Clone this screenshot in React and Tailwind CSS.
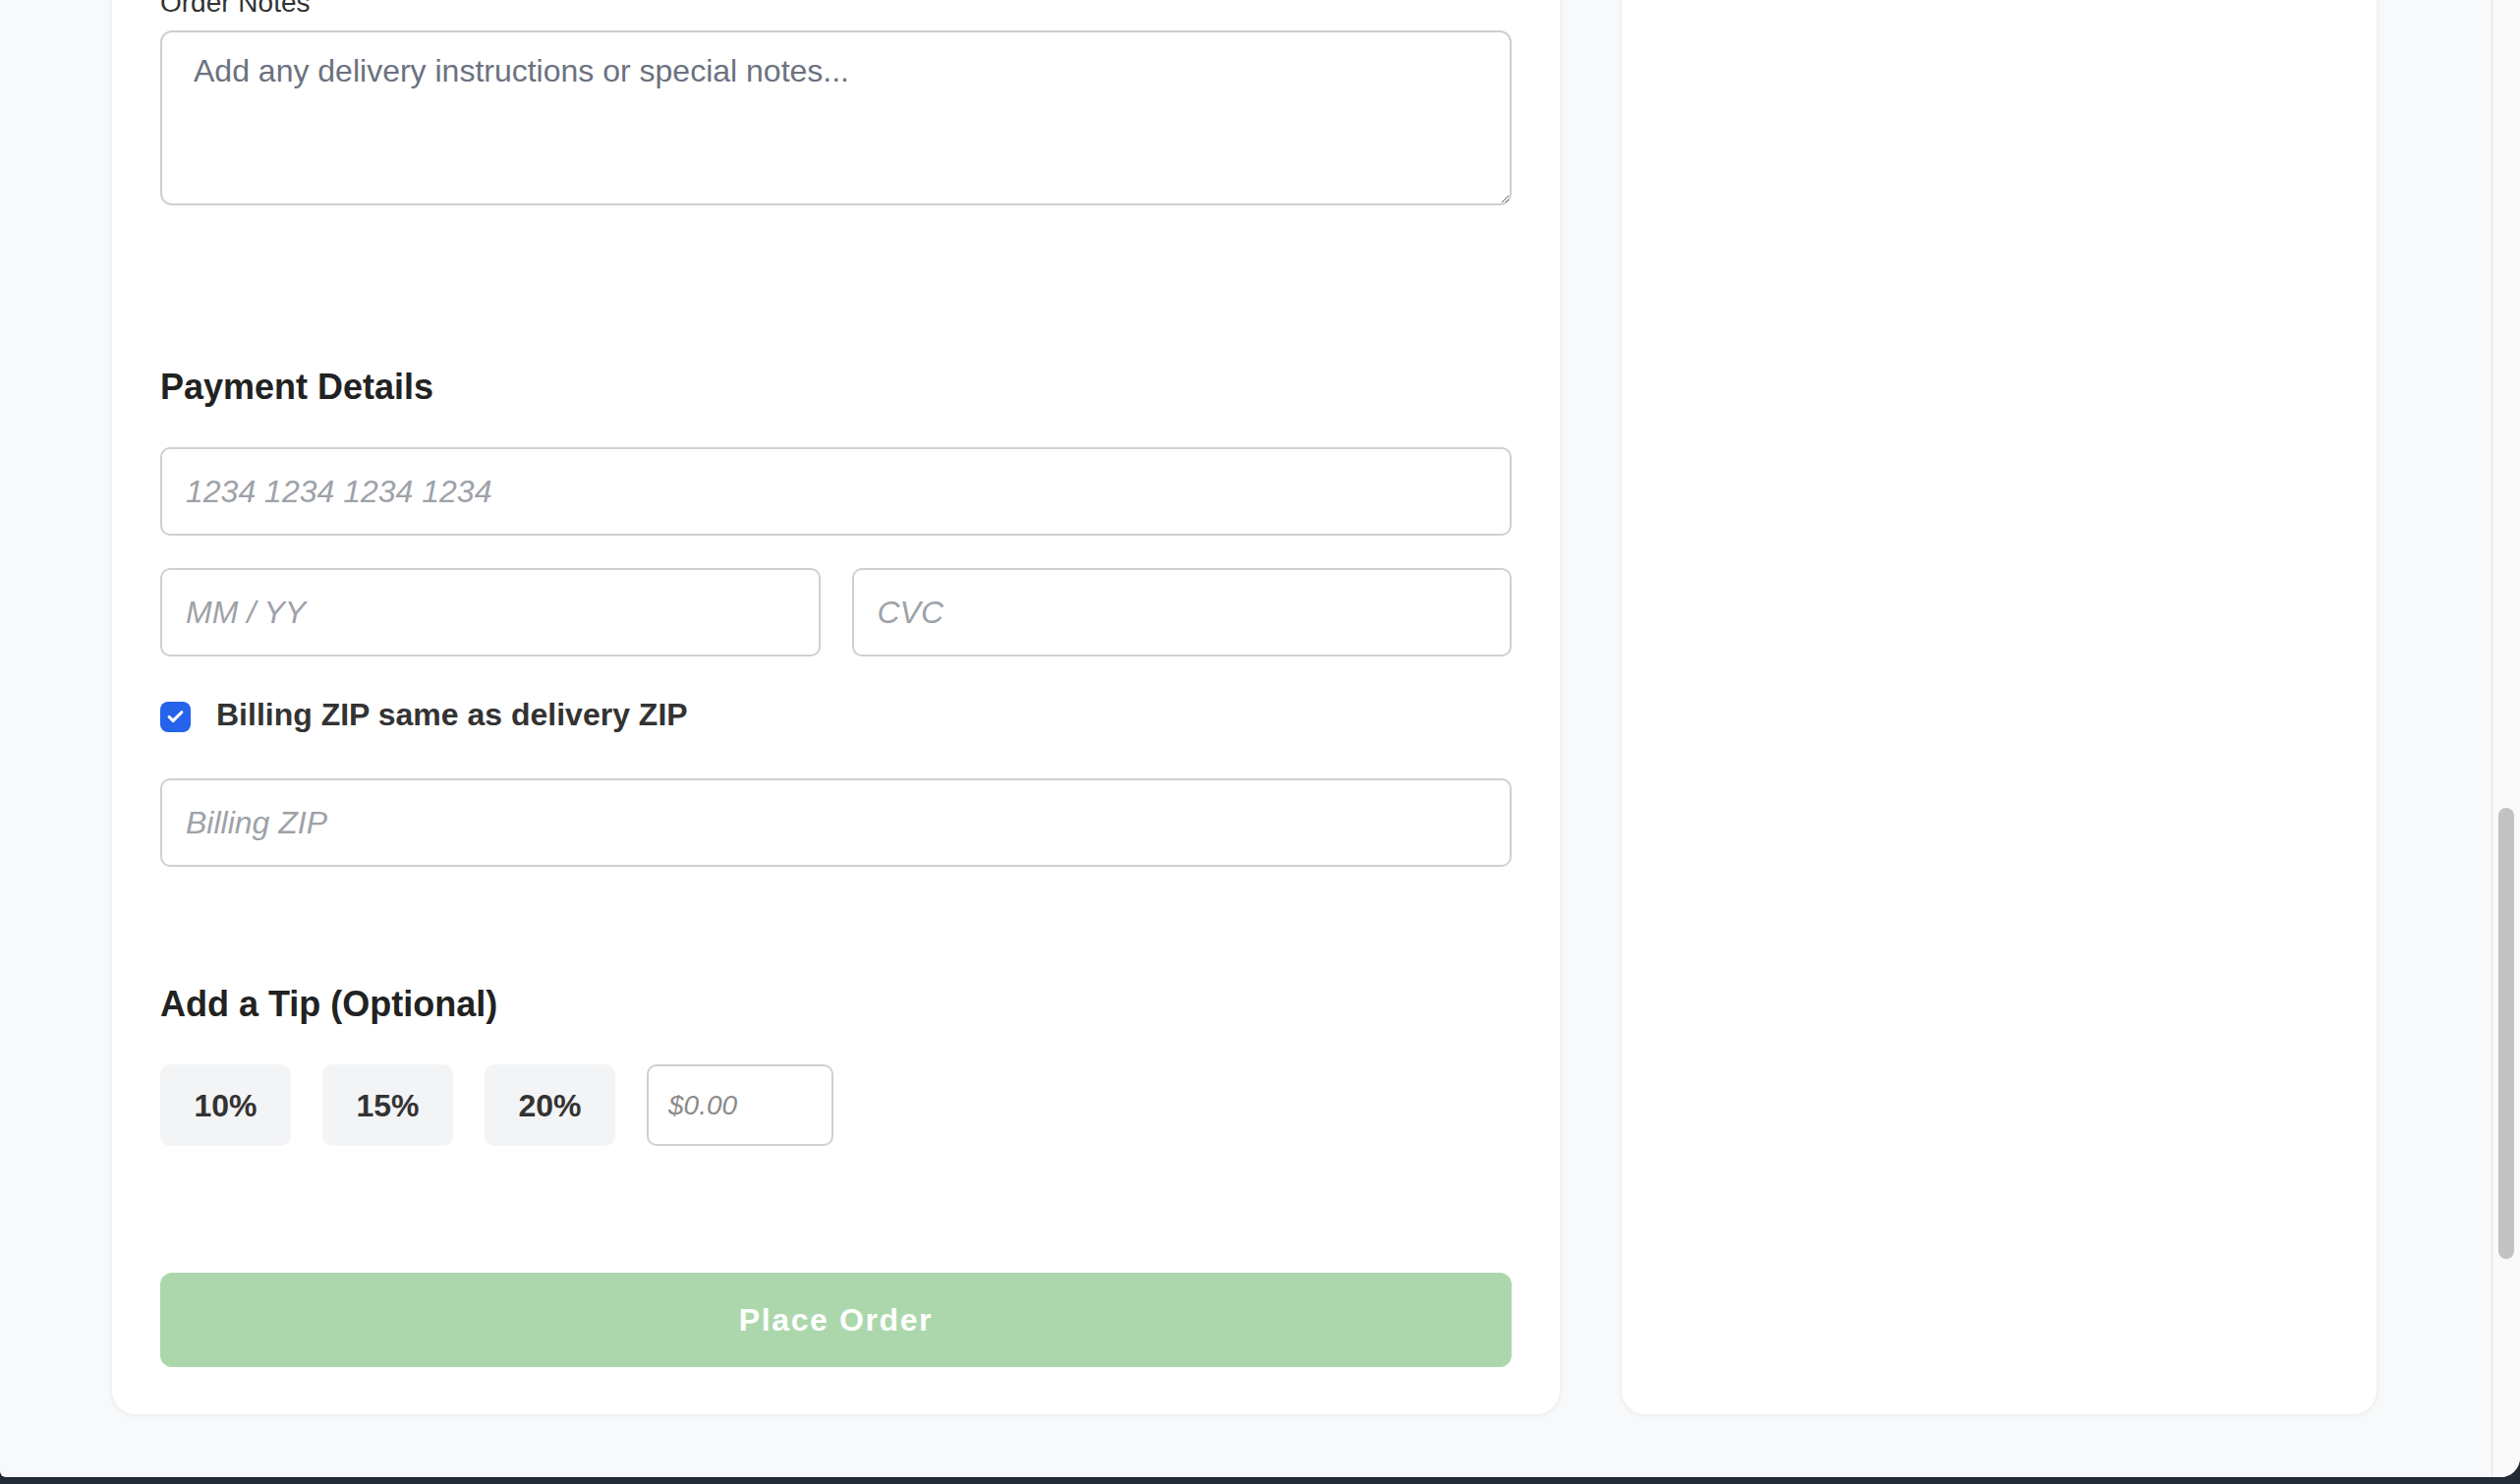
import React from 'react';
import { Check } from 'lucide-react';

const inputClass =
  'block w-full h-[90px] rounded-[10px] border-2 border-[#d0d0d0] bg-white px-[24px] text-[32px] italic text-[#333] placeholder:text-[#9ea2a8] outline-none';

function TipButton({ label }) {
  return (
    <button className="h-[83px] w-[133px] rounded-[10px] bg-[#f3f4f6] text-[32px] font-bold text-[#333]">
      {label}
    </button>
  );
}

export default function App() {
  return (
    <div className="h-[1510px] w-full overflow-hidden bg-[#222a35] font-['Liberation_Sans',Arial,sans-serif]">
      <div className="flex h-[1503px] overflow-hidden rounded-bl-[6px] rounded-br-[20px] bg-[#f8f9fa]">
        {/* Página desplazada: solo se ve la parte final del checkout */}
        <main className="flex-1 overflow-hidden">
          <div className="-mt-[64px] ml-[114px] grid w-[2304px] grid-cols-[1473px_768px] gap-x-[63px] pb-[64px]">
            <section className="rounded-[24px] bg-white px-[49px] pt-[50px] pb-[48px] shadow-[0_1px_6px_rgba(0,0,0,0.07)]">
              <label className="mb-[11px] block text-[28px] leading-[34px] text-[#333]">Order Notes</label>
              <textarea
                className="block h-[178px] w-full rounded-[12px] border-2 border-[#cfcfcf] bg-white px-[32px] pt-[19px] text-[32px] leading-[40px] text-[#333] placeholder:text-[#6b7280] outline-none"
                placeholder="Add any delivery instructions or special notes..."
              />

              {/* Pago */}
              <h2 className="mt-[163px] text-[36px] font-bold leading-[44px] text-[#222]">Payment Details</h2>
              <input className={`mt-[39px] ${inputClass}`} placeholder="1234 1234 1234 1234" />
              <div className="mt-[33px] grid grid-cols-2 gap-[32px]">
                <input className={inputClass} placeholder="MM / YY" />
                <input className={inputClass} placeholder="CVC" />
              </div>

              <div className="mt-[39px] flex h-[40px] items-start gap-[26px]">
                <span className="mt-[7px] flex h-[31px] w-[31px] items-center justify-center rounded-[8px] bg-[#2563eb]">
                  <Check className="h-[19px] w-[19px] text-white" strokeWidth={4} />
                </span>
                <span className="text-[32px] font-bold leading-[40px] text-[#333]">Billing ZIP same as delivery ZIP</span>
              </div>

              <input className={`mt-[45px] ${inputClass}`} placeholder="Billing ZIP" />

              {/* Propina */}
              <h2 className="mt-[118px] text-[36px] font-bold leading-[44px] text-[#222]">Add a Tip (Optional)</h2>
              <div className="mt-[39px] flex gap-[32px]">
                <TipButton label="10%" />
                <TipButton label="15%" />
                <TipButton label="20%" />
                <input
                  className="h-[83px] w-[190px] rounded-[10px] border-2 border-[#d0d0d0] bg-white px-[20px] text-[28px] italic text-[#333] placeholder:text-[#8b8b8b] outline-none"
                  placeholder="$0.00"
                />
              </div>

              <button
                disabled
                className="mt-[129px] h-[96px] w-full rounded-[12px] bg-[#acd7ac] text-[32px] font-bold tracking-[1.6px] text-white"
              >
                Place Order
              </button>
            </section>

            <aside className="rounded-[24px] bg-white shadow-[0_1px_6px_rgba(0,0,0,0.07)]" />
          </div>
        </main>

        {/* Barra de desplazamiento */}
        <div className="flex w-[29px] justify-center border-l border-[#e3e3e3] bg-[#fafafa]">
          <div className="mt-[822px] h-[459px] w-[16px] rounded-full bg-[#c2c2c2]" />
        </div>
      </div>
    </div>
  );
}
